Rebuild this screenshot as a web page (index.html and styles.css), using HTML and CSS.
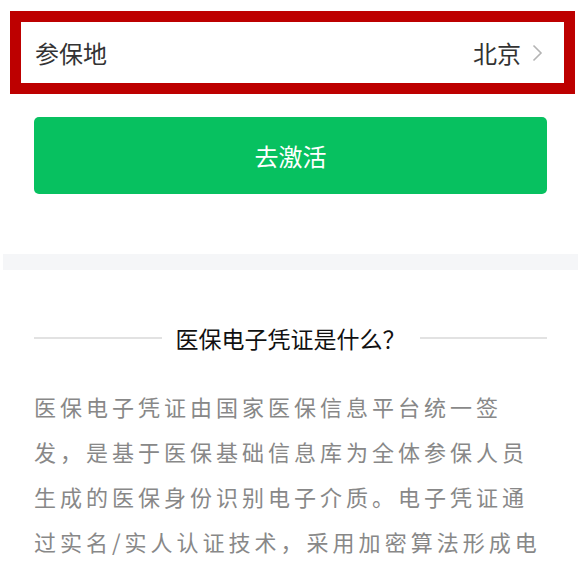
FILE: index.html
```html
<!DOCTYPE html>
<html lang="zh-CN">
<head>
  <meta charset="UTF-8" />
  <title>医保电子凭证</title>
  <link rel="stylesheet" href="styles.css">
</head>
<body>
  <div class="region">
    <div class="row">
      <span class="label">参保地</span>
      <span class="value">
        北京
        <svg class="arrow" width="11" height="18" viewBox="0 0 11 18">
          <polyline points="1.5,1.5 9,9 1.5,16.5" fill="none" stroke="#b4b4b4" stroke-width="1.6" />
        </svg>
      </span>
    </div>
  </div>

  <button class="activate">去激活</button>

  <div class="band"></div>

  <div class="intro">
    <div class="title">
      <span class="line"></span>
      <h2>医保电子凭证是什么？</h2>
      <span class="line"></span>
    </div>
    <p class="desc">医保电子凭证由国家医保信息平台统一签发，是基于医保基础信息库为全体参保人员生成的医保身份识别电子介质。电子凭证通过实名/实人认证技术，采用加密算法形成电子凭证，实现线上线下全国通用。</p>
  </div>
</body>
</html>
```

FILE: styles.css
```css
body {
  margin: 0;
  background: #fff;
  font-family: "Noto Sans CJK SC", "Noto Sans", sans-serif;
  overflow: hidden;
}

.region {
  margin: 11px 8px 0 10px;
  border: 11px solid #bd0000;
}

.row {
  height: 61px;
  display: flex;
  align-items: center;
  justify-content: space-between;
  padding: 0 21px 0 14px;
  font-size: 24px;
  color: #333;
}

.value {
  display: flex;
  align-items: center;
  gap: 11px;
}

.arrow {
  display: block;
}

.activate {
  display: block;
  width: 513px;
  height: 77px;
  margin: 23px 0 0 34px;
  border: none;
  border-radius: 5px;
  background: #07c160;
  color: #fff;
  font-family: inherit;
  font-size: 24px;
  padding: 0;
}

.band {
  height: 16px;
  margin: 60px 5px 0 3px;
  background: #f5f6f8;
}

.intro {
  padding: 53px 36px 0 34px;
}

.title {
  display: flex;
  align-items: center;
  gap: 14px;
}

.title .line {
  flex: 1;
  height: 2px;
  background: #e2e2e2;
}

.title h2 {
  margin: 0;
  font-size: 23px;
  font-weight: normal;
  line-height: 30px;
  color: #111;
}

.desc {
  margin: 31px 0 0;
  font-size: 22px;
  line-height: 45px;
  letter-spacing: 4px;
  color: #888;
}
```
